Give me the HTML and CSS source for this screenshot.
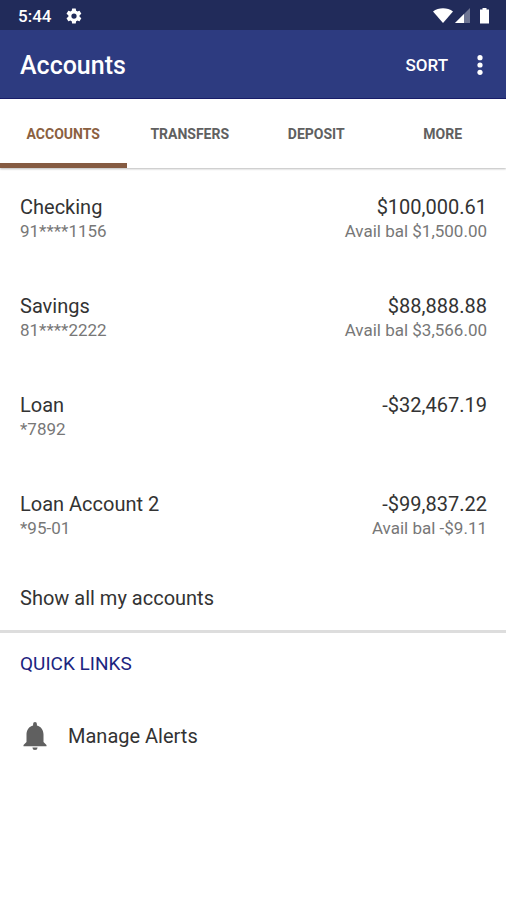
FILE: index.html
```html
<!DOCTYPE html>
<html lang="en">
<head>
<meta charset="utf-8">
<meta name="viewport" content="width=device-width, initial-scale=1">
<title>Accounts</title>
<link rel="stylesheet" href="styles.css">
</head>
<body>
<div class="status">
  <span class="clock">5:44</span>
  <svg class="gear" viewBox="0 0 24 24" aria-hidden="true"><path d="M19.4 13a7.500 7.500 0 0 0 0-2l2.100-1.600a.5.5 0 0 0 .1-.7l-2-3.400a.5.5 0 0 0-.6-.2l-2.500 1a7.300 7.300 0 0 0-1.700-1l-.4-2.700a.5.5 0 0 0-.5-.4h-4a.5.5 0 0 0-.5.4L9 5.100a7.700 7.700 0 0 0-1.700 1l-2.500-1a.5.5 0 0 0-.6.2l-2 3.400a.5.5 0 0 0 .1.700L4.500 11a7.900 7.900 0 0 0 0 2l-2.200 1.600a.5.5 0 0 0-.1.700l2 3.400c.1.200.4.300.6.200l2.500-1a7.300 7.300 0 0 0 1.700 1l.4 2.700c0 .2.200.4.500.4h4c.2 0 .5-.2.500-.4l.4-2.700a7.700 7.700 0 0 0 1.700-1l2.500 1c.2.100.5 0 .6-.2l2-3.400a.5.500 0 0 0-.1-.7zM12 15.500a3.500 3.500 0 1 1 0-7 3.500 3.500 0 0 1 0 7z"/></svg>
  <svg class="indicators" viewBox="0 0 58 18" aria-hidden="true"><path d="M0 4.500C5.500.3 14.500.3 20 4.500L10 16z"/><path opacity=".35" d="M37 1v15H22z"/><path d="M31 7v9h-9z"/><path d="M47 2.500h2.500V1h4v1.500H56V16.500h-9z"/></svg>
</div>
<header class="bar">
  <h1>Accounts</h1>
  <button class="sort" type="button">SORT</button>
  <button class="more" type="button" aria-label="More options"><svg viewBox="0 0 6 20" aria-hidden="true"><circle cx="3" cy="2.700" r="2.600"/><circle cx="3" cy="10" r="2.600"/><circle cx="3" cy="17.300" r="2.600"/></svg></button>
</header>
<nav class="tabs">
  <a class="tab active" href="#accounts">ACCOUNTS</a>
  <a class="tab" href="#transfers">TRANSFERS</a>
  <a class="tab" href="#deposit">DEPOSIT</a>
  <a class="tab" href="#more">MORE</a>
</nav>
<main>
  <ul class="accounts" id="accounts">
    <li class="account"><div><p class="primary">Checking</p><p class="secondary">91****1156</p></div><div class="amounts"><p class="primary">$100,000.61</p><p class="secondary">Avail bal $1,500.00</p></div></li>
    <li class="account"><div><p class="primary">Savings</p><p class="secondary">81****2222</p></div><div class="amounts"><p class="primary">$88,888.88</p><p class="secondary">Avail bal $3,566.00</p></div></li>
    <li class="account"><div><p class="primary">Loan</p><p class="secondary">*7892</p></div><div class="amounts"><p class="primary">-$32,467.19</p></div></li>
    <li class="account"><div><p class="primary">Loan Account 2</p><p class="secondary">*95-01</p></div><div class="amounts"><p class="primary">-$99,837.22</p><p class="secondary">Avail bal -$9.11</p></div></li>
  </ul>
  <a class="show-all" href="#all">Show all my accounts</a>
  <section class="links">
    <h2>QUICK LINKS</h2>
    <a class="link" href="#alerts"><svg viewBox="0 0 24 28" aria-hidden="true"><path d="M12 28a2.600 2.600 0 0 0 2.600-2.500H9.400A2.600 2.600 0 0 0 12 28zM20.500 20V12.500c0-4.600-2.500-8.100-6.600-9.100V2a1.900 1.900 0 0 0-3.800 0v1.400c-4.100 1-6.600 4.500-6.600 9.100V20L.5 23v1.300h23V23z"/></svg><span>Manage Alerts</span></a>
  </section>
</main>
</body>
</html>
```
FILE: styles.css
```css
* { box-sizing: border-box; }
body { margin: 0; background: #fff; color: #333; font-family: Roboto, sans-serif; }
h1, h2, p, ul { margin: 0; padding: 0; }
a { color: inherit; text-decoration: none; }
button { border: 0; padding: 0; background: none; color: inherit; font: inherit; cursor: pointer; }
svg { display: block; fill: currentColor; }
.status { display: flex; align-items: center; height: 30px; padding: 2px 15px 0 18px; background: #212b5a; color: #fff; }
.clock { font-size: 17px; font-weight: 500; }
.gear { width: 18px; height: 18px; margin-left: 14px; }
.indicators { width: 58px; height: 18px; margin-left: auto; }
.bar { display: flex; align-items: center; height: 69px; padding: 2px 23px 0 20px; border-bottom: 1px solid #0c1264; background: #2d3b80; color: #fff; }
h1 { flex: 1; font-size: 25px; font-weight: 500; }
.sort { font-size: 17px; font-weight: 500; }
.more { margin-left: 29px; }
.more svg { width: 6px; height: 20px; }
.tabs { display: grid; grid-template-columns: repeat(4, 1fr); height: 69px; box-shadow: 0 1px 2px #bbb; }
.tab { display: flex; align-items: center; justify-content: center; padding-top: 6px; border-bottom: 5px solid transparent; font-size: 14px; font-weight: 700; color: #606060; }
.tab.active { color: #8b6040; border-color: #855b42; }
.accounts { list-style: none; }
.account { display: flex; justify-content: space-between; height: 99px; padding: 26px 19px 0 20px; }
.amounts { text-align: right; }
.primary, .show-all, .link { font-size: 20px; line-height: 26px; }
.secondary { font-size: 17px; line-height: 23px; color: #777; }
.show-all { display: block; padding: 21px 20px 19px; border-bottom: 3px solid #ddd; }
.links { padding: 18px 22px 20px 20px; }
h2 { font-size: 19px; line-height: 26px; font-weight: 400; color: #1c2480; }
.link { display: flex; align-items: center; gap: 20px; margin-top: 45px; padding-left: 2px; }
.link svg { width: 26px; height: 28px; color: #606060; }
```
